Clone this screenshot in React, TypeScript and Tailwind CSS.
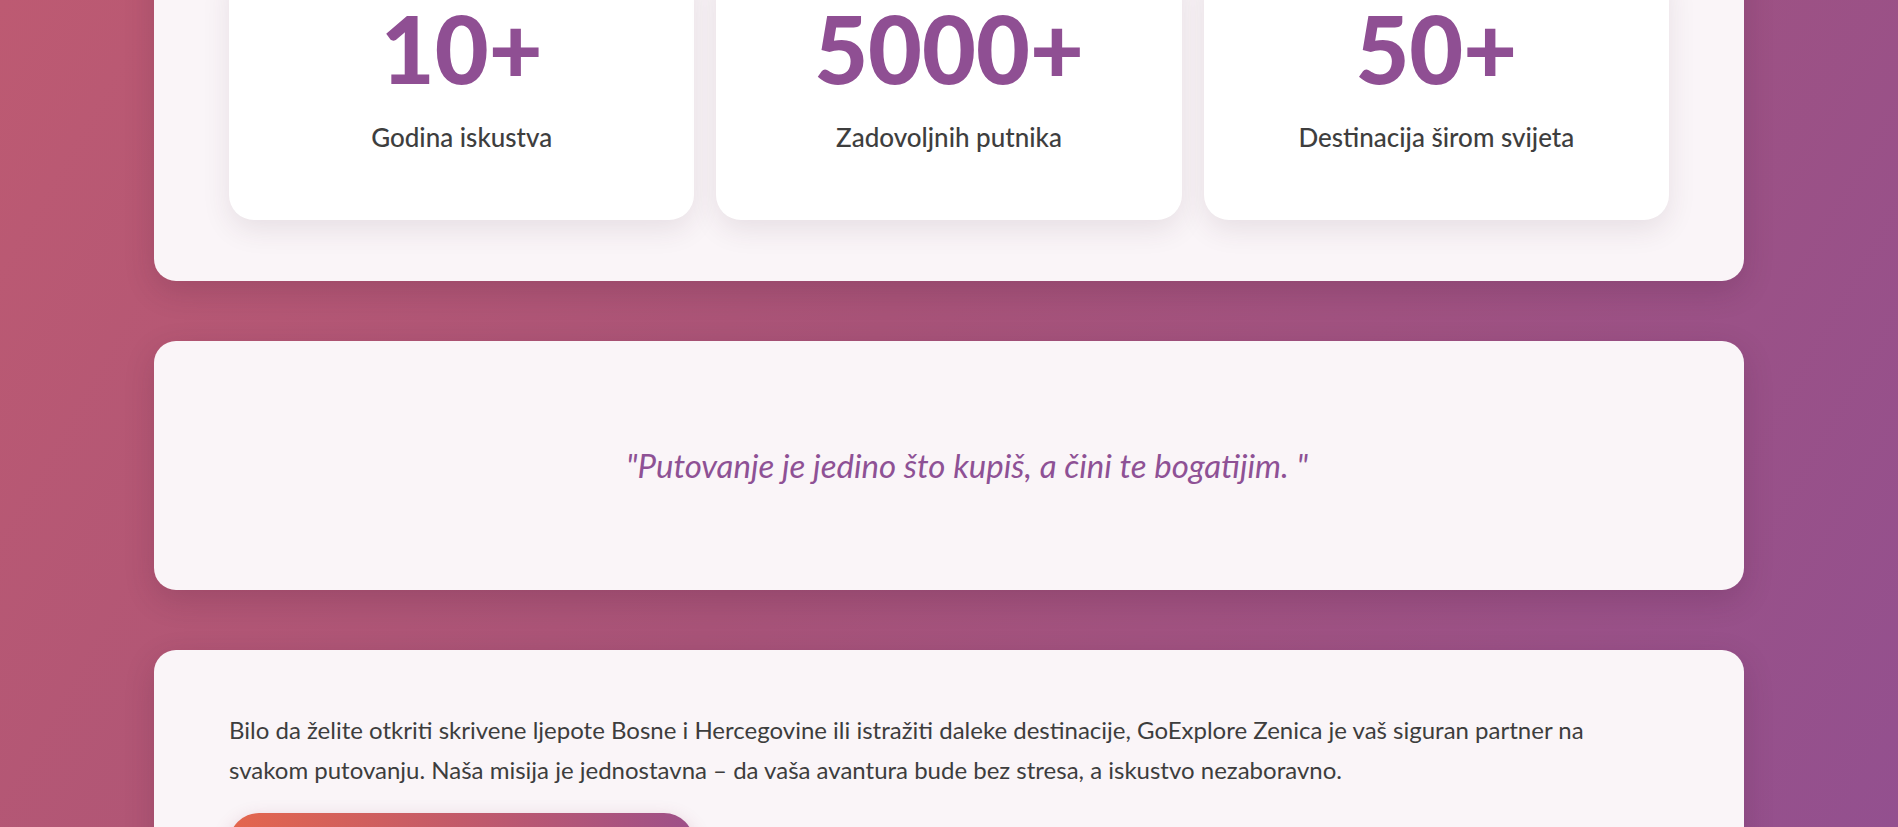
import React from "react";

const stats = [
  { value: "10+", label: "Godina iskustva" },
  { value: "5000+", label: "Zadovoljnih putnika" },
  { value: "50+", label: "Destinacija širom svijeta" },
];

export default function App() {
  return (
    <div
      className="h-screen w-full overflow-hidden bg-[linear-gradient(120deg,#bd5a72_0%,#a85378_45%,#93508f_100%)]"
      style={{ fontFamily: "Lato, 'Noto Sans', sans-serif" }}
    >
      <div className="mx-auto flex w-[1590px] flex-col gap-[60px] -mt-[97px]">
        <section className="rounded-[22px] bg-[#faf5f8] px-[75px] pt-[60px] pb-[61px] shadow-[0_10px_30px_rgba(60,20,50,0.18)]">
          <div className="grid grid-cols-3 gap-[22px]">
            {stats.map((s) => (
              <div
                key={s.value}
                className="flex flex-col items-center rounded-[25px] bg-white pt-[39px] pb-[67px] shadow-[0_10px_28px_rgba(70,40,60,0.10)]"
              >
                <div className="text-[93px] leading-none font-black text-[#8f4f93]">
                  {s.value}
                </div>
                <div className="mt-[27px] text-[26px] leading-[1.2] font-medium text-[#3e3e3e]">
                  {s.label}
                </div>
              </div>
            ))}
          </div>
        </section>

        <section className="flex h-[249px] items-center justify-center rounded-[22px] bg-[#faf5f8] pl-[36px] shadow-[0_10px_30px_rgba(60,20,50,0.18)]">
          <p className="text-[33px] italic text-[#8e5195]">
            "Putovanje je jedino što kupiš, a čini te bogatijim. "
          </p>
        </section>

        <section className="rounded-[22px] bg-[#faf5f8] px-[75px] pt-[60px] pb-[60px] shadow-[0_10px_30px_rgba(60,20,50,0.18)]">
          <p className="text-[24px] leading-[40px] text-[#3d3d3d]">
            Bilo da želite otkriti skrivene ljepote Bosne i Hercegovine ili istražiti daleke destinacije, GoExplore Zenica je vaš siguran partner na
            <br />
            svakom putovanju. Naša misija je jednostavna – da vaša avantura bude bez stresa, a iskustvo nezaboravno.
          </p>
          <div className="mt-[23px] h-[60px] w-[465px] rounded-full bg-[linear-gradient(90deg,#e4664d_0%,#c25a6a_50%,#9e5089_100%)] shadow-[0_6px_18px_rgba(150,60,90,0.25)]" />
        </section>
      </div>
    </div>
  );
}
